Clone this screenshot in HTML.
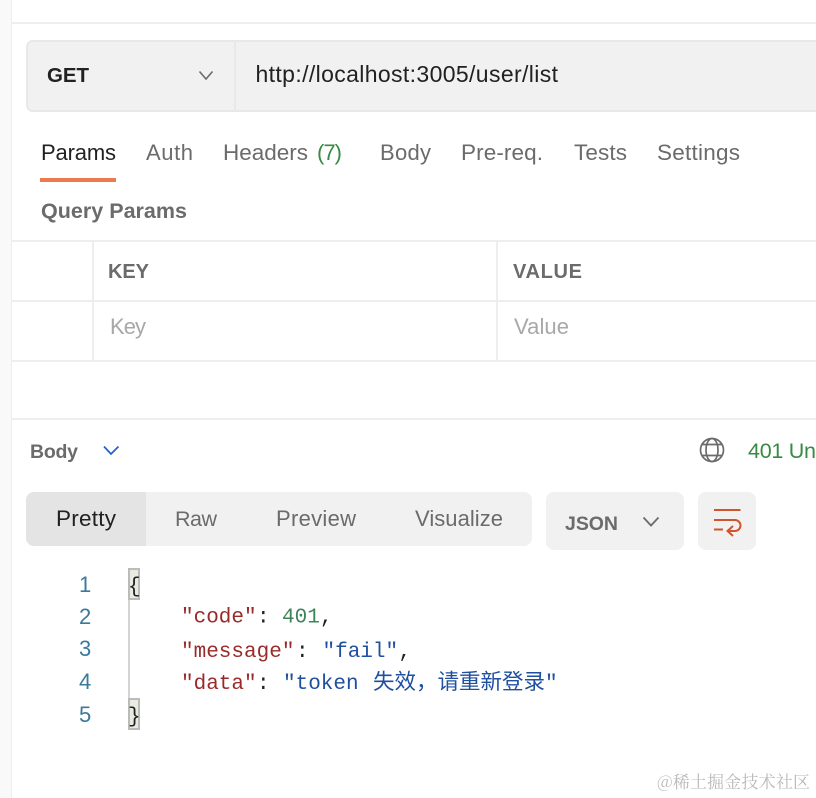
<!DOCTYPE html>
<html><head><meta charset="utf-8"><style>
html,body{margin:0;padding:0;background:#fff;width:816px;height:798px;overflow:hidden}
svg{display:block}
text{font-family:"Liberation Sans","Noto Sans CJK SC",sans-serif;font-size:22px;white-space:pre}
.t{fill:#6b6b6b}
.d{fill:#212121}
.b{font-weight:bold;fill:#6b6b6b}
.m{font-family:"Liberation Mono","Noto Sans CJK SC",monospace;font-size:21px}
.r{fill:#9a2a2a}.bl{fill:#1f4f9f}.g{fill:#3f8458}.k{fill:#222}
.n{fill:#3b7a9a;font-size:22px}
</style></head><body>
<svg width="816" height="798" viewBox="0 0 816 798" xmlns="http://www.w3.org/2000/svg">
<rect x="0" y="0" width="11" height="798" fill="#f9f9f9"/>
<rect x="11" y="0" width="1" height="798" fill="#eeeeee"/>
<rect x="12" y="22" width="804" height="2" fill="#eeeeee"/>

<rect x="27" y="41" width="800" height="70" rx="6" fill="#f1f1f1" stroke="#e8e8e8" stroke-width="2"/>
<rect x="234" y="41" width="2" height="70" fill="#e8e8e8"/>
<text x="47" y="82" class="d" textLength="42" lengthAdjust="spacing" style="font-weight:bold;font-size:20.500px">GET</text>
<path d="M199.500 71.500L206 79L212.500 71.500" fill="none" stroke="#6b6b6b" stroke-width="1.600"/>
<text x="255.500" y="82" class="d" style="font-size:23px" textLength="302.500" lengthAdjust="spacing">http://localhost:3005/user/list</text>

<text x="41" y="160" class="d" textLength="75">Params</text>
<text x="146" y="160" class="t" textLength="47">Auth</text>
<text x="223" y="160" class="t" style="font-size:22.500px" textLength="85">Headers</text>
<text x="317" y="160" fill="#388a43" textLength="25">(7)</text>
<text x="380" y="160" class="t" textLength="51">Body</text>
<text x="461" y="160" class="t" style="font-size:22.500px" textLength="82">Pre-req.</text>
<text x="574" y="160" class="t" style="font-size:22.500px" textLength="53">Tests</text>
<text x="657" y="160" class="t" style="font-size:22.500px" textLength="83">Settings</text>
<rect x="40" y="178" width="76" height="4" fill="#ec7a4f"/>

<text x="41" y="218" class="b" style="font-size:21.500px" textLength="146">Query Params</text>

<rect x="12" y="240" width="804" height="2" fill="#eeeeee"/>
<rect x="12" y="300" width="804" height="2" fill="#eeeeee"/>
<rect x="12" y="360" width="804" height="2" fill="#eeeeee"/>
<rect x="12" y="418" width="804" height="2" fill="#eeeeee"/>
<rect x="92" y="242" width="2" height="118" fill="#eeeeee"/>
<rect x="496" y="242" width="2" height="118" fill="#eeeeee"/>
<text x="108" y="278" class="b" style="font-size:20px" textLength="41">KEY</text>
<text x="513" y="278" class="b" style="font-size:20px" textLength="69">VALUE</text>
<text x="110" y="334" fill="#a8a8a8" textLength="36">Key</text>
<text x="514" y="334" fill="#a8a8a8" textLength="55">Value</text>

<text x="30" y="458" class="b" style="font-size:19.500px" textLength="48">Body</text>
<path d="M104 446.500L111 454L118.500 446.500" fill="none" stroke="#2a62c9" stroke-width="1.800"/>
<g fill="none" stroke="#6b6b6b" stroke-width="1.700">
<circle cx="712" cy="450" r="11.500"/>
<ellipse cx="712" cy="450" rx="6" ry="11.500"/>
<path d="M702 444.500H722M702 455.500H722"/>
</g>
<text x="748" y="458" fill="#388a43" style="font-size:21.500px" textLength="68">401 Un</text>

<rect x="26" y="492" width="506" height="54" rx="8" fill="#f1f1f1"/>
<path d="M146 492H34a8 8 0 0 0-8 8V538a8 8 0 0 0 8 8H146Z" fill="#e4e4e4"/>
<text x="56" y="526" class="d" style="font-size:22.500px" textLength="60">Pretty</text>
<text x="175" y="526" class="t" style="font-size:21.500px" textLength="42">Raw</text>
<text x="276" y="526" class="t" textLength="80">Preview</text>
<text x="415" y="526" class="t" textLength="88">Visualize</text>

<rect x="546" y="492" width="138" height="58" rx="8" fill="#f1f1f1"/>
<text x="565" y="530" class="b" style="font-size:19.500px" textLength="53">JSON</text>
<path d="M643.500 517.500L651 525.500L658.500 517.500" fill="none" stroke="#6b6b6b" stroke-width="1.800"/>
<rect x="698" y="492" width="58" height="58" rx="8" fill="#f1f1f1"/>
<g fill="none" stroke="#d0552f" stroke-width="2">
<path d="M714 510H740.500"/>
<path d="M714 520H735a5.500 5.500 0 0 1 0 11H728"/>
<path d="M714 529.500H723"/>
<path d="M733 526L727.500 531L733 536"/>
</g>

<text x="79" y="592" class="n" textLength="11">1</text>
<text x="79" y="624" class="n" textLength="11">2</text>
<text x="79" y="656" class="n" textLength="11">3</text>
<text x="79" y="689" class="n" textLength="11">4</text>
<text x="79" y="722" class="n" textLength="11">5</text>

<rect x="128" y="600" width="2" height="98" fill="#d4d4d4"/>
<rect x="129" y="569" width="10" height="30" fill="#e8ebe0" stroke="#bbbbbb" stroke-width="2"/>
<rect x="129" y="699" width="10" height="30" fill="#e8ebe0" stroke="#bbbbbb" stroke-width="2"/>
<text x="128" y="592" class="m k">{</text>
<text x="128" y="722" class="m k">}</text>

<text x="181" y="622.500" class="m r">"code"</text>
<text x="257" y="622.500" class="m k">:</text>
<text x="282" y="622.500" class="m g">401</text>
<text x="320" y="622.500" class="m k">,</text>

<text x="181" y="657" class="m r">"message"</text>
<text x="296" y="657" class="m k">:</text>
<text x="322.500" y="657" class="m bl">"fail"</text>
<text x="398.500" y="657" class="m k">,</text>

<text x="181" y="689" class="m r">"data"</text>
<text x="257" y="689" class="m k">:</text>
<text x="283" y="689" class="m bl">"token</text>
<text x="373" y="689" class="bl" style="font-size:21.500px;font-family:'Noto Sans CJK SC',sans-serif">失效，请重新登录</text>
<text x="545" y="689" class="m bl">"</text>

<text x="657" y="788" fill="#b9b9b9" style="font-size:17px;font-family:'Noto Serif CJK SC',serif" textLength="153">@稀土掘金技术社区</text>
</svg>
</body></html>
